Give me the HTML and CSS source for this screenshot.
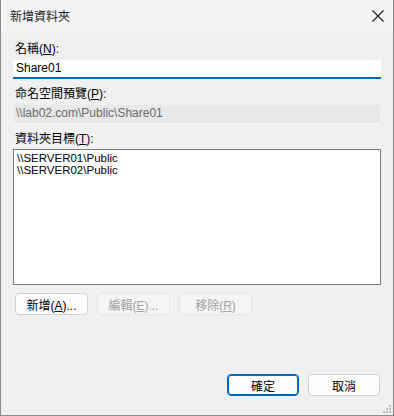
FILE: index.html
```html
<!DOCTYPE html>
<html lang="zh-Hant">
<head>
    <meta charset="UTF-8">
    <title>新增資料夾</title>
    <link rel="stylesheet" href="styles.css">
</head>
<body>
    <div class="window">
        <div class="titlebar">
            <span class="title">新增資料夾</span>
            <svg class="close" width="12" height="12" viewBox="0 0 12 12">
                <path d="M0.5 0.5 L11.5 11.5 M11.5 0.5 L0.5 11.5" stroke="#1a1a1a" stroke-width="1.1" fill="none"/>
            </svg>
        </div>

        <div class="content">
            <label class="label">名稱(<u>N</u>):</label>
            <div class="textbox active">Share01</div>

            <label class="label">命名空間預覽(<u>P</u>):</label>
            <div class="textbox readonly">\\lab02.com\Public\Share01</div>

            <label class="label">資料夾目標(<u>T</u>):</label>
            <div class="listbox">
                <div class="item">\\SERVER01\Public</div>
                <div class="item">\\SERVER02\Public</div>
            </div>

            <div class="actions">
                <button class="btn">新增(<u>A</u>)...</button>
                <button class="btn" disabled>編輯(<u>E</u>)...</button>
                <button class="btn" disabled>移除(<u>R</u>)</button>
            </div>
        </div>

        <div class="footer">
            <button class="btn default">確定</button>
            <button class="btn">取消</button>
        </div>

        <svg class="grip" width="10" height="10" viewBox="0 0 10 10">
            <rect x="7" y="1" width="2" height="2" fill="#bcbcbc"/>
            <rect x="4" y="4" width="2" height="2" fill="#bcbcbc"/>
            <rect x="7" y="4" width="2" height="2" fill="#bcbcbc"/>
            <rect x="1" y="7" width="2" height="2" fill="#bcbcbc"/>
            <rect x="4" y="7" width="2" height="2" fill="#bcbcbc"/>
            <rect x="7" y="7" width="2" height="2" fill="#bcbcbc"/>
        </svg>
    </div>
</body>
</html>
```

FILE: styles.css
```css
body {
    margin: 0;
    font-family: "Liberation Sans", "Noto Sans CJK TC", sans-serif;
    font-size: 12px;
    color: #000;
    background: #f0f0f0;
}
.window {
    position: relative;
    width: 394px;
    height: 416px;
    box-sizing: border-box;
    border: 1px solid #8a8a8a;
    border-top: none;
    background: #f0f0f0;
    display: flex;
    flex-direction: column;
}
.titlebar {
    height: 31px;
    background: #f3f3f3;
    display: flex;
    align-items: center;
    justify-content: space-between;
    padding: 0 9px 0 9px;
}
.title {
    font-size: 12px;
    color: #1a1a1a;
}
.content {
    display: flex;
    flex-direction: column;
    padding: 10px 12px 0 12px;
}
.label {
    display: block;
    line-height: 16px;
    height: 16px;
    padding-left: 2px;
    color: #000;
}
.label u {
    text-underline-offset: 1px;
}
.textbox {
    height: 19px;
    box-sizing: border-box;
    line-height: 17px;
    padding-left: 3px;
    margin-top: 3px;
    margin-bottom: 7px;
    white-space: nowrap;
}
.active {
    background: #fff;
    border-bottom: 2px solid #0067c0;
}
.readonly {
    margin-left: 1px;
    margin-right: 1px;
    background: #e8e8e8;
    border-bottom: 1px solid #fafafa;
    color: #6a6a6a;
    padding-left: 2px;
}
.listbox {
    height: 136px;
    margin-top: 2px;
    box-sizing: border-box;
    background: #fff;
    border: 1px solid #7a7a7a;
    padding: 2px 0 0 3px;
}
.item {
    font-size: 11.5px;
    line-height: 13px;
    height: 12px;
}
.actions {
    display: flex;
    gap: 9px;
    margin-top: 8px;
    padding-left: 2px;
}
.btn {
    width: 73px;
    height: 22px;
    box-sizing: border-box;
    border: 1px solid #d0d0d0;
    border-radius: 4px;
    background: #fdfdfd;
    font-family: "Liberation Sans", "Noto Sans CJK TC", sans-serif;
    font-size: 12px;
    color: #000;
    padding: 0;
}
.btn:disabled {
    background: #f5f5f5;
    border-color: #e5e5e5;
    color: #a0a0a0;
}
.footer {
    display: flex;
    justify-content: flex-end;
    gap: 9px;
    margin-top: auto;
    padding: 0 13px 19px 0;
}
.footer .btn {
    width: 72px;
}
.default {
    border: 1px solid #0067c0;
    box-shadow: inset 0 0 0 1px #0067c0;
}
.grip {
    position: absolute;
    right: 1px;
    bottom: 1px;
}
```
